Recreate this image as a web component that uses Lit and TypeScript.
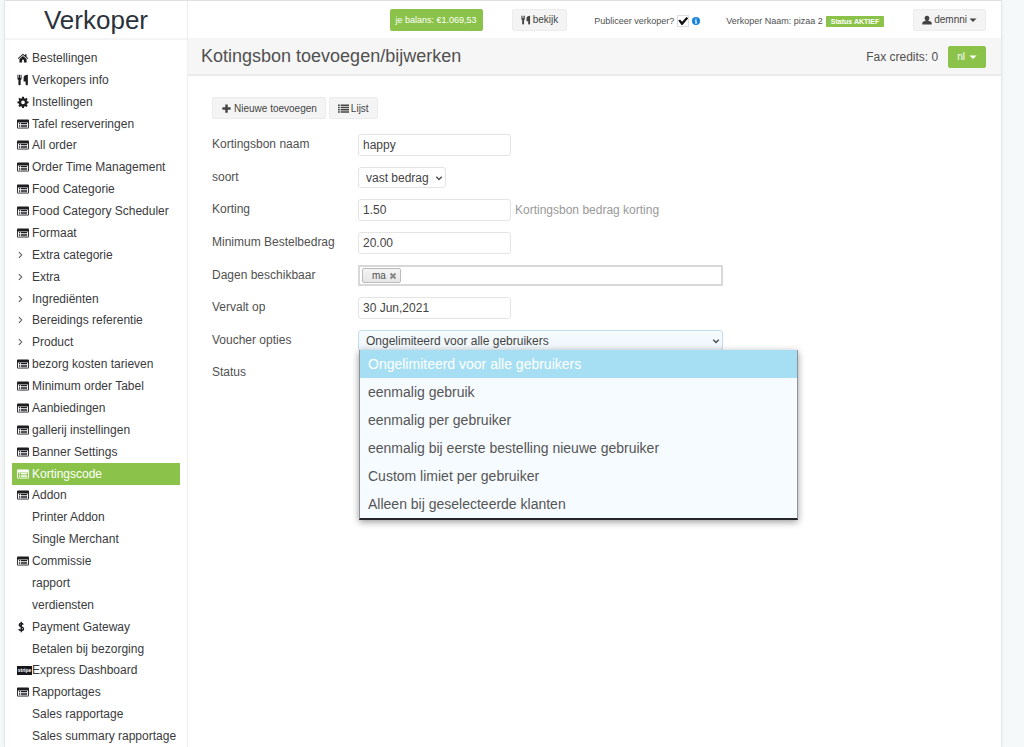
import { LitElement, html, svg, css, nothing } from "lit";
import { customElement, property, state } from "lit/decorators.js";
import { classMap } from "lit/directives/class-map.js";

const glyphs: Record<string, unknown> = {
  home: svg`<path d="M8 2.200 1 8.200l.8 1L8 4l6.200 5.200.8-1-2.300-2V3h-1.900v1.600z"/><path d="M8 5.200 3.200 9.200V14h3.600v-3.600h2.400V14h3.600V9.200z"/>`,
  cutlery: svg`<path d="M.6 1h1.300v4h.8V1H4v4h.8V1h1.300v5.200c0 .9-.5 1.500-1.200 1.800V14c0 .6-.4 1-1 1h-1c-.6 0-1-.4-1-1V8C1.100 7.700.6 7.100.6 6.200zM14.500 1v13c0 .6-.4 1-1 1h-1c-.6 0-1-.4-1-1v-4H8.800V5c0-2.600 2-4 5.700-4z"/>`,
  gear: svg`<path fill-rule="evenodd" d="M6.800 1h2.400l.4 2 1.200.5 1.700-1.200 1.700 1.700-1.200 1.700.5 1.200 1.900.4v2.400l-1.900.4-.5 1.200 1.200 1.700-1.700 1.700-1.700-1.200-1.200.5-.4 2H6.800l-.4-2-1.200-.5-1.700 1.200L1.800 13 3 11.300l-.5-1.200-1.900-.4V7.300l1.900-.4L3 5.700 1.800 4l1.700-1.700 1.700 1.200L6.400 3zM8 5.900a2.500 2.500 0 1 0 0 5 2.500 2.500 0 0 0 0-5z"/>`,
  listAlt: svg`<path fill-rule="evenodd" d="M1.200 2h13.600c.7 0 1.200.5 1.200 1.200v9.600c0 .7-.5 1.200-1.200 1.200H1.200C.5 14 0 13.500 0 12.800V3.200C0 2.500.5 2 1.200 2zM1.200 6v6.900h13.600V6z"/><path d="M2.600 6.800h1.600v1.300H2.600zm2.600 0h8.300v1.300H5.200zM2.600 8.900h1.600v1.300H2.600zm2.600 0h8.300v1.300H5.200zM2.600 11h1.600v1.300H2.600zm2.600 0h8.300v1.300H5.200z"/>`,
  chevron: svg`<path d="M2.500 4.200 6.300 8l-3.800 3.800" fill="none" stroke="#555" stroke-width="1.400"/>`,
  dollar: svg`<path d="M8.300 4.800C7.700 3.700 6.700 3.300 5.500 3.300 4 3.300 3 4 3 5.200c0 2.900 5.600 1.700 5.600 5 0 1.500-1.300 2.400-3 2.400-1.400 0-2.700-.6-3.300-1.800M5.700 1v14" fill="none" stroke="currentColor" stroke-width="1.900"/>`,
  plus: svg`<path d="M6.200 2h3.600v4.200H14v3.600H9.800V14H6.200V9.800H2V6.200h4.200z"/>`,
  list: svg`<path d="M0 2h2.500v2.200H0zm3.800 0H16v2.200H3.800zM0 5.300h2.500v2.200H0zm3.800 0H16v2.200H3.800zM0 8.600h2.500v2.200H0zm3.800 0H16v2.200H3.800zM0 11.900h2.500v2.200H0zm3.800 0H16v2.200H3.800z"/>`,
  user: svg`<path d="M8 1c2.400 0 3.900 1.600 3.900 3.800 0 1.500-.6 2.900-1.600 3.700v.7l3.400 1.300c1 .4 1.800 1.100 1.800 2.200V15H.5v-2.300c0-1.100.8-1.800 1.800-2.200l3.400-1.300v-.7C4.700 7.700 4.100 6.300 4.100 4.800 4.100 2.600 5.600 1 8 1z"/>`,
  caret: svg`<path d="M1 5h14L8 12z"/>`,
  info: svg`<circle cx="8" cy="8" r="8" fill="#1581dd"/><path d="M6.600 2.800h2.700v2.200H6.600zM5.600 6.300h3.700v5h1.200v1.600H5.600v-1.600h1.200V7.900H5.600z" fill="#fff"/>`,
  arrow: svg`<path d="M2.500 5.500 8 11l5.500-5.500" fill="none" stroke="currentColor" stroke-width="3"/>`,
  cross: svg`<path d="m3 3 10 10M13 3 3 13" fill="none" stroke="currentColor" stroke-width="4"/>`,
};

@customElement("ui-icon")
class UiIcon extends LitElement {
  @property() name = "";
  static styles = css`
    :host { display: inline-flex; width: 12px; height: 12px; flex: none; }
    svg { width: 100%; height: 100%; fill: currentColor; display: block; }
  `;
  render() {
    return html`<svg viewBox="0 0 16 16" aria-hidden="true">${glyphs[this.name]}</svg>`;
  }
}

interface MenuItem { label: string; icon?: string; active?: boolean }

const menu: MenuItem[] = [
  { label: "Bestellingen", icon: "home" },
  { label: "Verkopers info", icon: "cutlery" },
  { label: "Instellingen", icon: "gear" },
  { label: "Tafel reserveringen", icon: "listAlt" },
  { label: "All order", icon: "listAlt" },
  { label: "Order Time Management", icon: "listAlt" },
  { label: "Food Categorie", icon: "listAlt" },
  { label: "Food Category Scheduler", icon: "listAlt" },
  { label: "Formaat", icon: "listAlt" },
  { label: "Extra categorie", icon: "chevron" },
  { label: "Extra", icon: "chevron" },
  { label: "Ingrediënten", icon: "chevron" },
  { label: "Bereidings referentie", icon: "chevron" },
  { label: "Product", icon: "chevron" },
  { label: "bezorg kosten tarieven", icon: "listAlt" },
  { label: "Minimum order Tabel", icon: "listAlt" },
  { label: "Aanbiedingen", icon: "listAlt" },
  { label: "gallerij instellingen", icon: "listAlt" },
  { label: "Banner Settings", icon: "listAlt" },
  { label: "Kortingscode", icon: "listAlt", active: true },
  { label: "Addon", icon: "listAlt" },
  { label: "Printer Addon" },
  { label: "Single Merchant" },
  { label: "Commissie", icon: "listAlt" },
  { label: "rapport" },
  { label: "verdiensten" },
  { label: "Payment Gateway", icon: "dollar" },
  { label: "Betalen bij bezorging" },
  { label: "Express Dashboard", icon: "stripe" },
  { label: "Rapportages", icon: "listAlt" },
  { label: "Sales rapportage" },
  { label: "Sales summary rapportage" },
];

const voucherOptions = [
  "Ongelimiteerd voor alle gebruikers",
  "eenmalig gebruik",
  "eenmalig per gebruiker",
  "eenmalig bij eerste bestelling nieuwe gebruiker",
  "Custom limiet per gebruiker",
  "Alleen bij geselecteerde klanten",
];

@customElement("side-menu")
class SideMenu extends LitElement {
  static styles = css`
    :host { display: flex; flex-direction: column; box-sizing: border-box; border-right: 1px solid #efefef; }
    .brand { margin: 0; height: 37px; border-bottom: 2px solid #f4f4f4; font-size: 26px; line-height: 38px; font-weight: 400; text-align: center; color: #2b323c; }
    nav { flex: 1; display: flex; padding: 7px 7px 0; }
    ul { list-style: none; margin: 0; padding: 0; flex: 1; display: flex; flex-direction: column; }
    li { flex: 1; display: flex; }
    a { flex: 1; display: flex; align-items: center; padding-left: 5px; color: #3a3a3d; text-decoration: none; font-size: 12px; line-height: 20px; white-space: nowrap; }
    .slot { width: 15px; flex: none; display: flex; color: #1d1d22; }
    .active, .active .slot { background: #8bc34a; color: #fff; }
    .stripe { background: #16161c; color: #fff; font-size: 5px; font-weight: 700; line-height: 9px; width: 15px; text-align: center; }
  `;
  render() {
    return html`
      <h1 class="brand">Verkoper</h1>
      <nav aria-label="Hoofdmenu"><ul>
        ${menu.map((m) => html`<li><a href="#" class=${classMap({ active: !!m.active })} aria-current=${m.active ? "page" : nothing}>
          <span class="slot">${m.icon === "stripe"
            ? html`<span class="stripe">stripe</span>`
            : m.icon ? html`<ui-icon name=${m.icon}></ui-icon>` : nothing}</span><span>${m.label}</span></a></li>`)}
      </ul></nav>`;
  }
}

@customElement("voucher-form")
class VoucherForm extends LitElement {
  @state() selected = 0;
  static styles = css`
    :host { display: block; padding: 21px 24px; color: #505050; font-size: 12px; }
    button { font: inherit; color: inherit; }
    .toolbar { display: flex; gap: 3px; margin-bottom: 15px; }
    .btn { box-sizing: border-box; display: flex; align-items: center; gap: 2px; height: 22px; padding: 0 8px; border: 1px solid #ececec; border-radius: 2px; background: #f4f4f4; color: #444; font-size: 10px; }
    .btn ui-icon { width: 11px; height: 11px; }
    .form { display: grid; grid-template-columns: 146px minmax(0, 1fr); row-gap: 11px; }
    .form > label, .form > .label { line-height: 21px; }
    .cell { display: flex; align-items: center; gap: 4px; }
    input, select { box-sizing: border-box; height: 22px; font: inherit; color: #444; border: 1px solid #e4e4e4; border-radius: 3px; background: #fff; margin: 0; }
    .text { width: 153px; padding: 0 4px; }
    .hint { color: #999; }
    .picker { position: relative; display: flex; }
    .picker select { appearance: none; width: 100%; height: 21px; padding: 0 14px 0 7px; }
    .picker ui-icon { position: absolute; right: 3px; top: 7px; width: 8px; height: 8px; pointer-events: none; }
    .short { width: 88px; }
    .wide { width: 100%; max-width: 365px; }
    .wide select { background: linear-gradient(#f6fbff, #eef5fa); border-color: #c5dde8; }
    .tags { box-sizing: border-box; display: flex; align-items: center; width: 100%; max-width: 365px; height: 21px; padding: 0 2px; border: 2px solid #d8d8d8; }
    .tag { box-sizing: border-box; display: flex; align-items: center; gap: 3px; height: 15px; padding: 0 3px 0 9px; border: 1px solid #bbb; border-radius: 2px; background: linear-gradient(#f4f4f4, #e6e6e6); font-size: 10px; }
    .tag button { display: flex; padding: 0; border: 0; background: none; color: #888; }
    .tag ui-icon { width: 8px; height: 8px; }
    .menu { position: absolute; z-index: 2; top: 20px; left: 1px; box-sizing: border-box; width: 439px; margin: 0; padding: 0; list-style: none; background: #f6fbff; border: 1px solid #909396; border-top: 0; border-bottom: 2px solid #24242a; box-shadow: 0 2px 7px rgba(0, 0, 0, .4); font-size: 14px; }
    .menu li { height: 28px; line-height: 28px; padding-left: 8px; color: #555; }
    .menu .on { background: #a6dff4; color: #fff; }
  `;
  render() {
    return html`
      <div class="toolbar">
        <button class="btn"><ui-icon name="plus"></ui-icon>Nieuwe toevoegen</button>
        <button class="btn"><ui-icon name="list"></ui-icon>Lijst</button>
      </div>
      <form class="form">
        <label for="name">Kortingsbon naam</label>
        <div class="cell"><input class="text" id="name" value="happy" /></div>
        <label for="kind">soort</label>
        <div class="cell"><div class="picker short"><select id="kind"><option>vast bedrag</option></select><ui-icon name="arrow"></ui-icon></div></div>
        <label for="discount">Korting</label>
        <div class="cell"><input class="text" id="discount" value="1.50" /><span class="hint">Kortingsbon bedrag korting</span></div>
        <label for="minimum">Minimum Bestelbedrag</label>
        <div class="cell"><input class="text" id="minimum" value="20.00" /></div>
        <span class="label">Dagen beschikbaar</span>
        <div class="cell"><div class="tags"><span class="tag">ma<button type="button" aria-label="ma verwijderen"><ui-icon name="cross"></ui-icon></button></span></div></div>
        <label for="expires">Vervalt op</label>
        <div class="cell"><input class="text" id="expires" value="30 Jun,2021" /></div>
        <label for="voucher">Voucher opties</label>
        <div class="cell"><div class="picker wide">
          <select id="voucher">${voucherOptions.map((o) => html`<option>${o}</option>`)}</select>
          <ui-icon name="arrow"></ui-icon>
          <ul class="menu" role="listbox" aria-label="Voucher opties">
            ${voucherOptions.map((o, i) => html`<li role="option" aria-selected=${i === this.selected} class=${classMap({ on: i === this.selected })} @click=${() => { this.selected = i; }}>${o}</li>`)}
          </ul>
        </div></div>
        <span class="label">Status</span>
      </form>`;
  }
}

@customElement("app-root")
class AppRoot extends LitElement {
  static styles = css`
    :host { display: block; box-sizing: border-box; min-height: 100vh; padding: 0 22px 0 4px; background: #f6f9f9; font-family: "Liberation Sans", Arial, sans-serif; color: #505050; }
    .shell { display: grid; grid-template-columns: 183px minmax(0, 1fr); box-sizing: border-box; min-height: 100vh; background: #fff; border: 1px solid #e6e8e8; border-top-color: #e0e0e0; border-bottom: 0; box-shadow: 0 0 4px rgba(0, 0, 0, .06); }
    .top { display: flex; align-items: center; height: 37px; padding-right: 15px; font-size: 9px; white-space: nowrap; border-bottom: 1px solid #f4f4f4; }
    button { display: flex; align-items: center; justify-content: center; gap: 2px; height: 22px; padding: 0 8px; border: 1px solid #ececec; border-radius: 2px; background: #f4f4f4; color: #444; font: inherit; font-size: 10px; box-sizing: border-box; }
    .balance { margin-left: auto; height: 22px; line-height: 22px; padding: 0 6px; border-radius: 2px; background: #8bc34a; color: #fff; }
    .view { margin-left: 29px; }
    .publish { display: flex; align-items: center; gap: 3px; margin-left: 27px; padding-top: 3px; }
    .publish input { appearance: none; margin: 0; width: 12px; height: 12px; border: 1px solid #ddd; background: #fff; display: grid; place-items: center; }
    .publish input:checked::before { content: ""; width: 10px; height: 8px; background: #111; clip-path: polygon(0 45%, 18% 30%, 38% 58%, 82% 0, 100% 16%, 42% 100%, 32% 100%); }
    .publish ui-icon { width: 8px; height: 8px; }
    .seller { display: flex; align-items: center; gap: 3px; margin-left: 26px; padding-top: 3px; }
    .status { padding: 0 5px; line-height: 11px; border-radius: 1px; background: #8bc34a; color: #fff; font-size: 7px; font-weight: 700; }
    .user { margin-left: 29px; }
    .user ui-icon, .lang ui-icon { width: 8px; height: 8px; }
    .user .person, .view ui-icon { width: 10px; height: 10px; }
    .bar { display: flex; align-items: center; height: 35px; padding: 0 15px 0 13px; background: #f6f6f6; border-bottom: 2px solid #ebebeb; font-size: 12px; }
    h2 { margin: 0; flex: 1; font-size: 18px; font-weight: 400; }
    .lang { margin-left: 10px; gap: 4px; background: #8bc34a; border-color: #8bc34a; color: #fff; }
  `;
  render() {
    return html`
      <div class="shell">
        <side-menu></side-menu>
        <main>
          <header class="top">
            <span class="balance">je balans: €1.069,53</span>
            <button class="view"><ui-icon name="cutlery"></ui-icon>bekijk</button>
            <label class="publish">Publiceer verkoper? <input type="checkbox" checked /><ui-icon name="info"></ui-icon></label>
            <span class="seller">Verkoper Naam: pizaa 2 <span class="status">Status AKTIEF</span></span>
            <button class="user"><ui-icon class="person" name="user"></ui-icon>demnni<ui-icon name="caret"></ui-icon></button>
          </header>
          <div class="bar">
            <h2>Kotingsbon toevoegen/bijwerken</h2>
            <span>Fax credits: 0</span>
            <button class="lang">nl<ui-icon name="caret"></ui-icon></button>
          </div>
          <voucher-form></voucher-form>
        </main>
      </div>`;
  }
}
